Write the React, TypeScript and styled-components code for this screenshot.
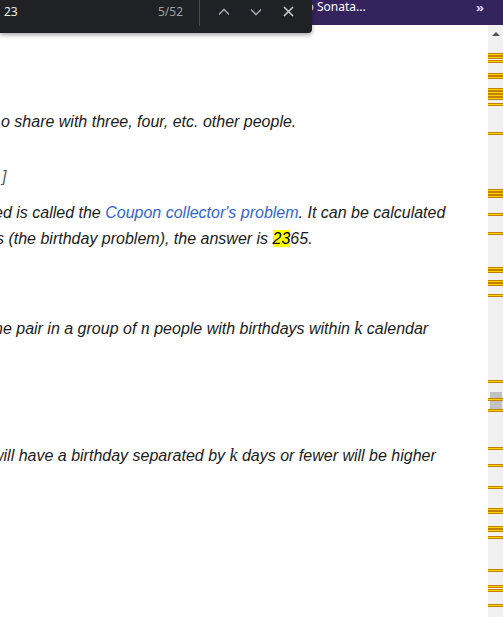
import React from "react";
import styled, { createGlobalStyle } from "styled-components";

const GlobalStyle = createGlobalStyle`
  html, body {
    margin: 0;
    padding: 0;
    background: #ffffff;
    overflow: hidden;
  }
`;

const markerTops = [
  53, 56, 60, 73, 76, 88, 91, 94, 97, 103, 132, 189, 192, 195, 213, 232, 267, 270, 280, 283,
  294, 380, 398, 409, 447, 464, 486, 508, 511, 526, 529, 536, 569, 585, 589, 604,
];

const Page = styled.div`
  position: relative;
  width: 503px;
  height: 617px;
  display: flex;
  flex-direction: column;
  overflow: hidden;
`;

const BookmarkBar = styled.div`
  height: 25px;
  flex-shrink: 0;
  background: #35235e;
  display: flex;
  align-items: flex-start;
  padding-left: 282px;
  padding-right: 18px;
  box-sizing: border-box;
  font-family: "Noto Sans", "Open Sans", sans-serif;
  font-size: 12px;
  line-height: 14px;
  color: #ffffff;
`;

const Bookmark = styled.span`
  flex: 1;
  white-space: nowrap;
`;

const Chevrons = styled.span`
  color: #d6d1e6;
  font-size: 13px;
  font-weight: 700;
  letter-spacing: -1px;
  margin-right: 2px;
`;

const FindBar = styled.div`
  position: absolute;
  top: 0;
  left: 0;
  width: 312px;
  height: 33px;
  background: #202124;
  border-bottom-right-radius: 4px;
  box-shadow: 0 2px 4px rgba(0, 0, 0, 0.35);
  display: flex;
  align-items: flex-start;
  padding: 0 8px 0 4px;
  box-sizing: border-box;
  font-family: "Noto Sans", "Open Sans", sans-serif;
  font-size: 12px;
`;

const Query = styled.div`
  flex: 1;
  height: 23px;
  display: flex;
  align-items: center;
  justify-content: space-between;
  padding-right: 16px;
`;

const QueryText = styled.span`
  color: #e8eaed;
`;

const Count = styled.span`
  color: #9aa0a6;
`;

const Divider = styled.div`
  width: 1px;
  height: 26px;
  background: #4a4c50;
  margin-right: 8px;
`;

const IconButton = styled.div`
  width: 32px;
  height: 23px;
  display: flex;
  align-items: center;
  justify-content: center;
`;

const Viewport = styled.div`
  flex: 1;
  display: flex;
  min-height: 0;
`;

const Content = styled.div`
  flex: 1;
  overflow: hidden;
  padding-top: 84px;
  font-family: "Liberation Sans", Arial, sans-serif;
  font-style: italic;
  font-size: 16px;
  line-height: 26px;
  color: #1b1c1d;
`;

const Line = styled.div<{ $offset: number; $gap?: number }>`
  white-space: nowrap;
  margin-left: ${(p) => p.$offset}px;
  margin-top: ${(p) => p.$gap ?? 0}px;
`;

const Bracket = styled.span`
  color: #54595d;
`;

const Link = styled.span`
  color: #3366cc;
`;

const Match = styled.span`
  background: #ffff00;
  color: #000000;
`;

const MathVar = styled.span`
  font-family: "Liberation Serif", "Times New Roman", serif;
  font-size: 18px;
`;

const Scrollbar = styled.div`
  position: relative;
  width: 15px;
  flex-shrink: 0;
  background: #f1f1f1;
`;

const ArrowUp = styled.div`
  width: 15px;
  height: 17px;
  display: flex;
  justify-content: center;
  padding-top: 7px;
  box-sizing: border-box;

  &::before {
    content: "";
    width: 0;
    height: 0;
    border-left: 4px solid transparent;
    border-right: 4px solid transparent;
    border-bottom: 4px solid #505050;
  }
`;

const Thumb = styled.div`
  position: absolute;
  left: 2px;
  right: 1px;
  top: 367px;
  height: 20px;
  background: #c1c1c1;
`;

const Marker = styled.div`
  position: absolute;
  left: 0;
  right: 0;
  height: 3px;
  box-sizing: border-box;
  background: #fbd400;
  border-top: 1px solid #c47f00;
  border-bottom: 1px solid #c47f00;
`;

const ChevronIcon = ({ down }: { down?: boolean }) => (
  <svg width="12" height="8" viewBox="0 0 12 8">
    <path
      d={down ? "M1 1.5 L6 6.5 L11 1.5" : "M1 6.5 L6 1.5 L11 6.5"}
      fill="none"
      stroke="#9aa0a6"
      strokeWidth="1.6"
    />
  </svg>
);

const CloseIcon = () => (
  <svg width="11" height="11" viewBox="0 0 11 11">
    <path d="M1 1 L10 10 M10 1 L1 10" stroke="#c4c7c5" strokeWidth="1.7" />
  </svg>
);

const App = () => (
  <>
    <GlobalStyle />
    <Page>
      <BookmarkBar>
        <Bookmark>Piano Sonata...</Bookmark>
        <Chevrons>»</Chevrons>
      </BookmarkBar>
      <Viewport>
        <Content>
          <Line $offset={1}>o share with three, four, etc. other people.</Line>
          <Line $offset={2} $gap={29}>
            <Bracket>]</Bracket>
          </Line>
          <Line $offset={-6} $gap={10}>
            ed is called the <Link>Coupon collector's problem</Link>. It can be calculated
          </Line>
          <Line $offset={-4}>
            s (the birthday problem), the answer is <Match>23</Match>65.
          </Line>
          <Line $offset={-6} $gap={63}>
            ne pair in a group of <MathVar>n</MathVar> people with birthdays within{" "}
            <MathVar>k</MathVar> calendar
          </Line>
          <Line $offset={-8} $gap={100}>
            will have a birthday separated by <MathVar>k</MathVar> days or fewer will be higher
          </Line>
        </Content>
        <Scrollbar>
          <ArrowUp />
          <Thumb />
          {markerTops.map((top) => (
            <Marker key={top} style={{ top: top - 25 }} />
          ))}
        </Scrollbar>
      </Viewport>
      <FindBar>
        <Query>
          <QueryText>23</QueryText>
          <Count>5/52</Count>
        </Query>
        <Divider />
        <IconButton>
          <ChevronIcon />
        </IconButton>
        <IconButton>
          <ChevronIcon down />
        </IconButton>
        <IconButton>
          <CloseIcon />
        </IconButton>
      </FindBar>
    </Page>
  </>
);

export default App;
